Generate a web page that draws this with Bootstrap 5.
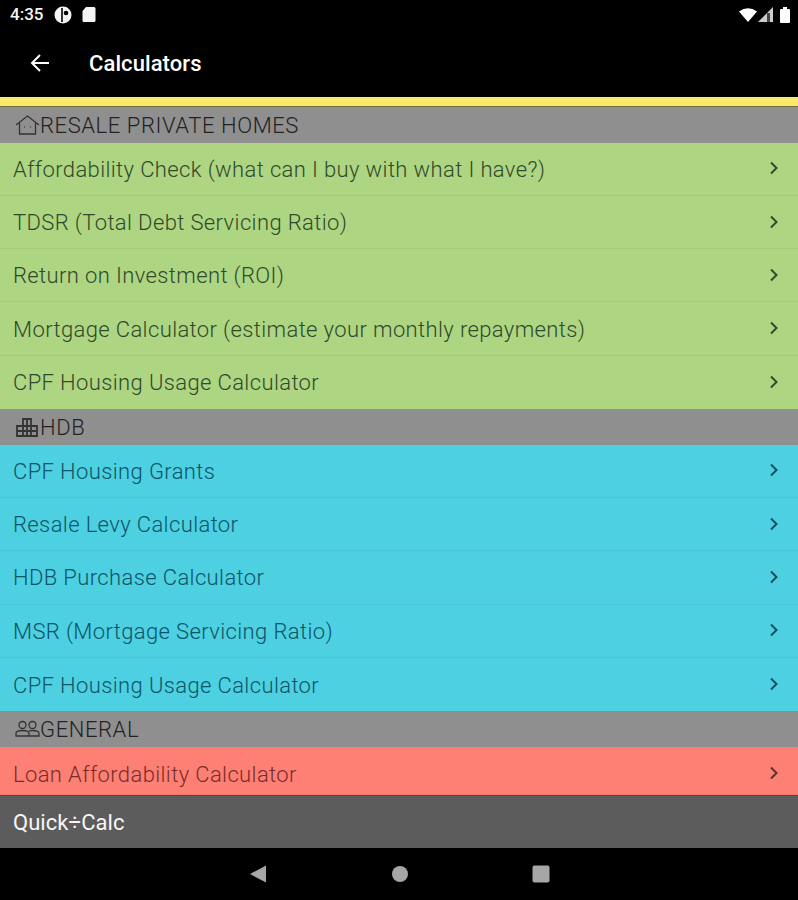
<!DOCTYPE html>
<html lang="en">
<head>
<meta charset="utf-8">
<title>Calculators</title>
<link href="https://cdn.jsdelivr.net/npm/bootstrap@5.3.0/dist/css/bootstrap.min.css" rel="stylesheet">
<style>
html,body{height:900px;overflow:hidden;background:#000}
body{font-family:Roboto,"Liberation Sans",sans-serif;width:798px}
.screen{height:900px}
.status-row{height:28px;padding:1px 8px 0 10px;color:#f4f4f4;font-size:17px;font-weight:500}
.dot-icon{margin-left:10px}
.wifi-icon{margin-right:1px}
.batt-icon{margin-left:7px}
.app-bar{height:69px;padding-left:30px;padding-top:1px;color:#fff}
.app-title{font-size:22px;font-weight:500;margin-left:39px;letter-spacing:.08px;padding-top:1px}
.accent-rule{height:10px;background:#f9ea6a;border-bottom:1px solid #6e6c3c}
.sect-head{height:35.6px;background:#8f8f8f;color:#222;font-size:22px;font-weight:300;padding:3px 0 0 15px;line-height:1;letter-spacing:.58px}
.sect-head svg{flex:none;margin-top:-2px}
.calc-row{height:53.3px;padding:1px 19px 0 13px;font-size:22px;font-weight:300;letter-spacing:.38px;border-bottom:1px solid rgba(0,0,0,.05)}
.calc-row svg{margin-top:-2px}
.calc-row:last-child{border-bottom:0}
.tone-green{background:#aed581;color:#2f4a2c}
.tone-blue{background:#4dd0e1;color:#0c5566}
.tone-red{background:#fe8074;color:#7a2c2a}
.tone-red.calc-row{height:48px;padding-top:9px}
.tone-red.calc-row svg{margin-top:-3px}
.tone-green svg{color:#2f4a2c}.tone-blue svg{color:#134f5c}.tone-red svg{color:#5e2f2c}
.quick-row{height:53px;background:#5c5c5c;color:#f6f6f6;font-size:22px;letter-spacing:.05px;padding:2px 0 0 13px;border-top:1px solid #4c4c4c}
.sys-nav{height:52px;padding:0 248px 0 249px;background:#000}
</style>
</head>
<body>
<div class="screen d-flex flex-column">
  <div class="status-row d-flex align-items-center justify-content-between">
    <div class="d-flex align-items-center">
      <span>4:35</span>
      <svg class="dot-icon" width="20" height="20" viewBox="0 0 20 20" aria-hidden="true"><circle cx="10" cy="10" r="8.500" fill="#f4f4f4"/><path d="M9 3v14" stroke="#000" stroke-width="1.600"/><circle cx="13" cy="8" r="2.300" fill="#000"/></svg>
      <svg class="ms-2" width="16" height="18" viewBox="0 0 16 18" aria-hidden="true"><path d="M5 1h8a1.500 1.500 0 0 1 1.500 1.500v12A1.500 1.500 0 0 1 13 16H3a1.500 1.500 0 0 1-1.500-1.500V5z" fill="#f4f4f4"/></svg>
    </div>
    <div class="d-flex align-items-center">
      <svg class="wifi-icon" width="18" height="14" viewBox="0 0 18 14" aria-hidden="true"><path d="M0 3.500Q9-3 18 3.500L9 14z" fill="#fff"/></svg>
      <svg width="15" height="15" viewBox="0 0 15 15" aria-hidden="true"><path d="M15 0v15H0z" fill="#fff" opacity=".8"/><path d="M9 6h3v9H9z" fill="#444"/></svg>
      <svg class="batt-icon" width="10" height="16" viewBox="0 0 10 16" aria-hidden="true"><path d="M3 0h4v2h2a1 1 0 0 1 1 1v12a1 1 0 0 1-1 1H1a1 1 0 0 1-1-1V3a1 1 0 0 1 1-1h2z" fill="#fff"/></svg>
    </div>
  </div>
  <div class="app-bar d-flex align-items-center">
    <svg width="20" height="20" viewBox="0 0 20 20" aria-hidden="true"><path d="M19 10H2M10 2l-8 8 8 8" fill="none" stroke="#fff" stroke-width="2"/></svg>
    <span class="app-title">Calculators</span>
  </div>
  <div class="accent-rule"></div>

  <div class="sect-head d-flex align-items-center">
    <svg width="25" height="22" viewBox="0 0 25 22" fill="none" stroke="#333" stroke-width="1.300" aria-hidden="true"><path d="M1 11 12.500 2 24 11M4.500 9v11h16V9M9 13h.8M15 13h.8"/></svg>
    <span>RESALE PRIVATE HOMES</span>
  </div>
  <div class="tone-green">
    <div class="calc-row d-flex align-items-center justify-content-between"><span>Affordability Check (what can I buy with what I have?)</span><svg width="10" height="14" viewBox="0 0 10 14" aria-hidden="true"><path d="M2 1.500 7.500 7 2 12.500" fill="none" stroke="currentColor" stroke-width="2"/></svg></div>
    <div class="calc-row d-flex align-items-center justify-content-between"><span>TDSR (Total Debt Servicing Ratio)</span><svg width="10" height="14" viewBox="0 0 10 14" aria-hidden="true"><path d="M2 1.500 7.500 7 2 12.500" fill="none" stroke="currentColor" stroke-width="2"/></svg></div>
    <div class="calc-row d-flex align-items-center justify-content-between"><span>Return on Investment (ROI)</span><svg width="10" height="14" viewBox="0 0 10 14" aria-hidden="true"><path d="M2 1.500 7.500 7 2 12.500" fill="none" stroke="currentColor" stroke-width="2"/></svg></div>
    <div class="calc-row d-flex align-items-center justify-content-between"><span>Mortgage Calculator (estimate your monthly repayments)</span><svg width="10" height="14" viewBox="0 0 10 14" aria-hidden="true"><path d="M2 1.500 7.500 7 2 12.500" fill="none" stroke="currentColor" stroke-width="2"/></svg></div>
    <div class="calc-row d-flex align-items-center justify-content-between"><span>CPF Housing Usage Calculator</span><svg width="10" height="14" viewBox="0 0 10 14" aria-hidden="true"><path d="M2 1.500 7.500 7 2 12.500" fill="none" stroke="currentColor" stroke-width="2"/></svg></div>
  </div>

  <div class="sect-head d-flex align-items-center">
    <svg width="25" height="22" viewBox="0 0 25 22" fill="none" stroke="#333" stroke-width="1.800" aria-hidden="true"><path d="M2 20V10h6V3h8v7h6v10zM2 15h20M8 10h8M8 10v10M12 3v17M16 10v10"/></svg>
    <span>HDB</span>
  </div>
  <div class="tone-blue">
    <div class="calc-row d-flex align-items-center justify-content-between"><span>CPF Housing Grants</span><svg width="10" height="14" viewBox="0 0 10 14" aria-hidden="true"><path d="M2 1.500 7.500 7 2 12.500" fill="none" stroke="currentColor" stroke-width="2"/></svg></div>
    <div class="calc-row d-flex align-items-center justify-content-between"><span>Resale Levy Calculator</span><svg width="10" height="14" viewBox="0 0 10 14" aria-hidden="true"><path d="M2 1.500 7.500 7 2 12.500" fill="none" stroke="currentColor" stroke-width="2"/></svg></div>
    <div class="calc-row d-flex align-items-center justify-content-between"><span>HDB Purchase Calculator</span><svg width="10" height="14" viewBox="0 0 10 14" aria-hidden="true"><path d="M2 1.500 7.500 7 2 12.500" fill="none" stroke="currentColor" stroke-width="2"/></svg></div>
    <div class="calc-row d-flex align-items-center justify-content-between"><span>MSR (Mortgage Servicing Ratio)</span><svg width="10" height="14" viewBox="0 0 10 14" aria-hidden="true"><path d="M2 1.500 7.500 7 2 12.500" fill="none" stroke="currentColor" stroke-width="2"/></svg></div>
    <div class="calc-row d-flex align-items-center justify-content-between"><span>CPF Housing Usage Calculator</span><svg width="10" height="14" viewBox="0 0 10 14" aria-hidden="true"><path d="M2 1.500 7.500 7 2 12.500" fill="none" stroke="currentColor" stroke-width="2"/></svg></div>
  </div>

  <div class="sect-head d-flex align-items-center">
    <svg width="25" height="22" viewBox="0 0 25 22" fill="none" stroke="#333" stroke-width="1.300" aria-hidden="true"><circle cx="7.500" cy="7" r="3.500"/><circle cx="17.500" cy="7" r="3.500"/><path d="M1 18v-2.500q0-3 6.500-3t6.500 3V18zM14 13q1-.5 3.500-.5 6.500 0 6.500 3V18H14"/></svg>
    <span>GENERAL</span>
  </div>
  <div class="tone-red calc-row d-flex align-items-center justify-content-between"><span>Loan Affordability Calculator</span><svg width="10" height="14" viewBox="0 0 10 14" aria-hidden="true"><path d="M2 1.500 7.500 7 2 12.500" fill="none" stroke="currentColor" stroke-width="2"/></svg></div>

  <div class="quick-row d-flex align-items-center">Quick÷Calc</div>
  <div class="sys-nav d-flex align-items-center justify-content-between">
    <svg width="18" height="18" viewBox="0 0 18 18" aria-hidden="true"><path d="M17 0.500V17.500L1 9z" fill="#a6a6a6"/></svg>
    <svg width="18" height="18" viewBox="0 0 18 18" aria-hidden="true"><circle cx="9" cy="9" r="8" fill="#a6a6a6"/></svg>
    <svg width="18" height="18" viewBox="0 0 18 18" aria-hidden="true"><rect x="0.500" y="0.500" width="17" height="17" rx="2" fill="#a6a6a6"/></svg>
  </div>
</div>
<script src="https://cdn.jsdelivr.net/npm/bootstrap@5.3.0/dist/js/bootstrap.bundle.min.js"></script>
</body>
</html>
